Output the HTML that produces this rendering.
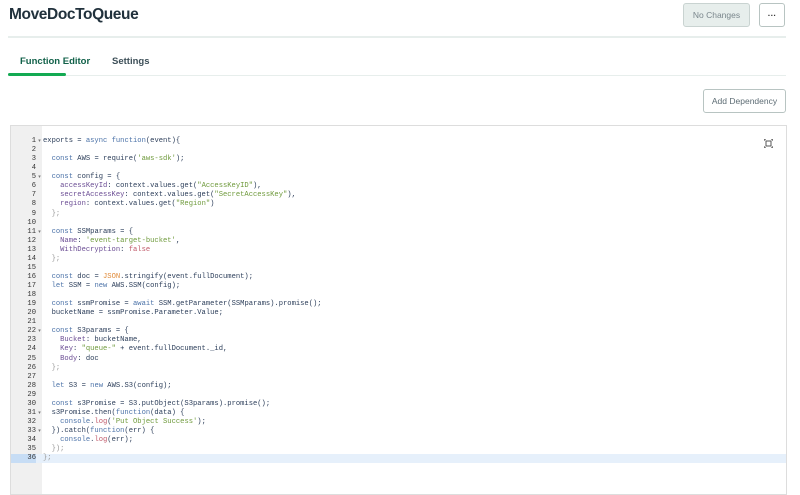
<!DOCTYPE html>
<html><head><meta charset="utf-8"><style>
*{box-sizing:border-box;margin:0;padding:0}
body{width:800px;height:485px;background:#fff;font-family:"Liberation Sans",sans-serif;overflow:hidden;position:relative;color:#21313c}
.title{position:absolute;left:9px;top:6px;font-size:15.5px;font-weight:bold;color:#21313c;letter-spacing:-0.4px}
.btn{position:absolute;border:1px solid #b8c4c2;border-radius:3px;background:#fff;font-size:8.5px;color:#5d6c74;display:flex;align-items:center;justify-content:center}
.hr{position:absolute;left:8px;width:778px;height:2px;background:#e7eeec;top:36px}
.tab{position:absolute;top:56px;font-size:9.5px;font-weight:bold}
.tabline{position:absolute;left:8px;top:75px;width:778px;height:1px;background:#e7eeec}
.ed{position:absolute;left:10px;top:125px;width:777px;height:370px;border:1px solid #ddd;background:#fff}
.gut{position:absolute;left:0;top:0;width:31px;height:100%;background:#f0f0f0}
.code{position:absolute;left:0;top:11px;width:100%;font-family:"Liberation Mono",monospace;font-size:7.15px;line-height:9.06px;white-space:pre;color:#2c3e5a}
.ln{display:inline-block;width:25px;text-align:right;color:#333;padding-right:0}
.ar{display:inline-block;width:7px;color:#777;font-size:5px;text-align:center}
.k{color:#4b72a8}.s{color:#6f9a3c}.p{color:#6b4d94}.o{color:#999}.j{color:#e08b3a}.f{color:#c05a6a}
.cur{background:#e6f0fb;display:block}
.cur .ln{background:#c7ddf5}
</style></head><body>
<div class="title">MoveDocToQueue</div>
<div class="btn" style="left:683px;top:3px;width:67px;height:24px;background:#e7eeec;border-color:#c9d3d1;color:#7a868c">No Changes</div>
<div class="btn" style="left:759px;top:3px;width:26px;height:24px;font-weight:bold;color:#333">···</div>
<div class="hr"></div>
<div class="tab" style="left:20px;color:#116149">Function Editor</div>
<div class="tab" style="left:112px;color:#3d4f58;font-weight:bold">Settings</div>
<div class="tabline"></div>
<div style="position:absolute;left:8px;top:73px;width:58px;height:3px;background:#13aa52;border-radius:2px"></div>
<div class="btn" style="left:703px;top:89px;width:83px;height:24px">Add Dependency</div>
<div class="ed"><div class="gut"></div>
<svg style="position:absolute;left:753px;top:13px" width="9" height="9" viewBox="0 0 9 9"><rect x="2" y="2" width="5" height="5" fill="none" stroke="#555" stroke-width="1"/><path d="M0 0h2M0 0v2M9 0h-2M9 0v2M0 9h2M0 9v-2M9 9h-2M9 9v-2" stroke="#555" stroke-width="1.2"/></svg>
<div class="code"><span class="ln">1</span><span class="ar">▾</span>exports = <span class="k">async</span> <span class="k">function</span>(event){
<span class="ln">2</span><span class="ar"></span>
<span class="ln">3</span><span class="ar"></span>  <span class="k">const</span> AWS = require(<span class="s">'aws-sdk'</span>);
<span class="ln">4</span><span class="ar"></span>
<span class="ln">5</span><span class="ar">▾</span>  <span class="k">const</span> config = {
<span class="ln">6</span><span class="ar"></span>    <span class="p">accessKeyId</span>: context.values.get(<span class="s">"AccessKeyID"</span>),
<span class="ln">7</span><span class="ar"></span>    <span class="p">secretAccessKey</span>: context.values.get(<span class="s">"SecretAccessKey"</span>),
<span class="ln">8</span><span class="ar"></span>    <span class="p">region</span>: context.values.get(<span class="s">"Region"</span>)
<span class="ln">9</span><span class="ar"></span>  <span class="o">};</span>
<span class="ln">10</span><span class="ar"></span>
<span class="ln">11</span><span class="ar">▾</span>  <span class="k">const</span> SSMparams = {
<span class="ln">12</span><span class="ar"></span>    <span class="p">Name</span>: <span class="s">'event-target-bucket'</span>,
<span class="ln">13</span><span class="ar"></span>    <span class="p">WithDecryption</span>: <span class="f">false</span>
<span class="ln">14</span><span class="ar"></span>  <span class="o">};</span>
<span class="ln">15</span><span class="ar"></span>
<span class="ln">16</span><span class="ar"></span>  <span class="k">const</span> doc = <span class="j">JSON</span>.stringify(event.fullDocument);
<span class="ln">17</span><span class="ar"></span>  <span class="k">let</span> SSM = <span class="k">new</span> AWS.SSM(config);
<span class="ln">18</span><span class="ar"></span>
<span class="ln">19</span><span class="ar"></span>  <span class="k">const</span> ssmPromise = <span class="k">await</span> SSM.getParameter(SSMparams).promise();
<span class="ln">20</span><span class="ar"></span>  bucketName = ssmPromise.Parameter.Value;
<span class="ln">21</span><span class="ar"></span>
<span class="ln">22</span><span class="ar">▾</span>  <span class="k">const</span> S3params = {
<span class="ln">23</span><span class="ar"></span>    <span class="p">Bucket</span>: bucketName,
<span class="ln">24</span><span class="ar"></span>    <span class="p">Key</span>: <span class="s">"queue-"</span> + event.fullDocument._id,
<span class="ln">25</span><span class="ar"></span>    <span class="p">Body</span>: doc
<span class="ln">26</span><span class="ar"></span>  <span class="o">};</span>
<span class="ln">27</span><span class="ar"></span>
<span class="ln">28</span><span class="ar"></span>  <span class="k">let</span> S3 = <span class="k">new</span> AWS.S3(config);
<span class="ln">29</span><span class="ar"></span>
<span class="ln">30</span><span class="ar"></span>  <span class="k">const</span> s3Promise = S3.putObject(S3params).promise();
<span class="ln">31</span><span class="ar">▾</span>  s3Promise.then(<span class="k">function</span>(data) {
<span class="ln">32</span><span class="ar"></span>    <span class="k">console</span>.<span class="f">log</span>(<span class="s">'Put Object Success'</span>);
<span class="ln">33</span><span class="ar">▾</span>  }).catch(<span class="k">function</span>(err) {
<span class="ln">34</span><span class="ar"></span>    <span class="k">console</span>.<span class="f">log</span>(err);
<span class="ln">35</span><span class="ar"></span>  <span class="o">});</span>
<span class="cur"><span class="ln">36</span><span class="ar"></span><span class="o">};</span></span></div>
</div>
</body></html>
